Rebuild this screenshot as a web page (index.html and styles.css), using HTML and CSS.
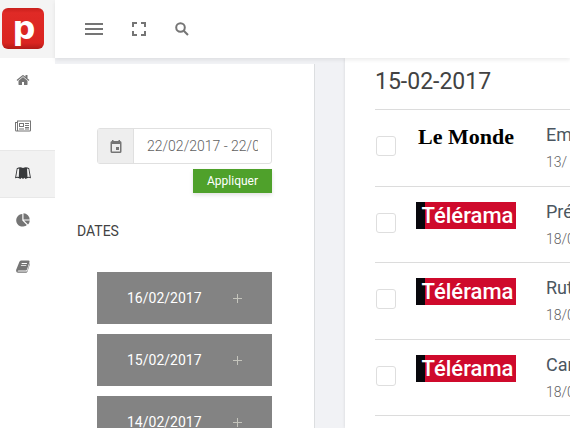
FILE: index.html
```html
<!DOCTYPE html>
<html lang="fr">
<head>
  <meta charset="UTF-8">
  <meta name="viewport" content="width=device-width, initial-scale=1.0">
  <title>Revue de presse</title>
  <link rel="stylesheet" href="styles.css">
</head>
<body>

  <!-- Menu latéral -->
  <nav class="sidebar">
    <a class="logo" href="#" aria-label="Accueil">
      <svg width="42" height="42" viewBox="0 0 42 42">
        <defs>
          <linearGradient id="rouge" x1="0" y1="0" x2="0" y2="1">
            <stop offset="0" stop-color="#c9201d"/>
            <stop offset=".12" stop-color="#e02a26"/>
            <stop offset=".85" stop-color="#da2420"/>
            <stop offset="1" stop-color="#b01a17"/>
          </linearGradient>
        </defs>
        <rect width="42" height="41" rx="6" fill="url(#rouge)"/>
        <text class="logo-lettre" x="22" y="31" text-anchor="middle">p</text>
      </svg>
    </a>
    <a class="menu-item" href="#" aria-label="Tableau de bord">
      <svg width="14" height="14" viewBox="64 0 1664 1792"><path d="M1472 992v480q0 26-19 45t-45 19h-384v-384h-256v384h-384q-26 0-45-19t-19-45v-480q0-1 .5-3t.5-3l575-474 575 474q1 2 1 6zm223-69l-62 74q-8 9-21 11h-3q-13 0-21-7l-692-577-692 577q-12 8-24 7-13-2-21-11l-62-74q-8-10-7-23.500t11-21.500l719-599q32-26 76-26t76 26l244 204v-195q0-14 9-23t23-9h192q14 0 23 9t9 23v408l219 182q10 8 11 21.500t-7 23.500z"/></svg>
    </a>
    <a class="menu-item" href="#" aria-label="Articles">
      <svg width="16" height="12" viewBox="0 0 16 12"><path fill-rule="evenodd" d="M2 .5h14v9.700q0 1.300-1.300 1.300H1.500Q0 11.500 0 10V2h2zM3 1.500V10.500h11.500q.5 0 .5-.5V1.500zM1 3v7q0 .5.500.5T2 10V3zM4 3h5v4H4zm1 1v2h3V4zM10 3h4v1h-4zm0 2h4v1h-4zm0 2h4v1h-4zM4 8.500h5v1H4zm6 0h4v1h-4z"/></svg>
    </a>
    <a class="menu-item actif" href="#" aria-label="Revues">
      <svg width="16" height="12" viewBox="0 0 16 12"><path fill-rule="evenodd" d="M1.800 1.200Q5 -.5 8 1Q11 -.5 14.200 1.200L16 11.300Q13.500 10.200 11.500 11.600L10.500 12L9.500 10.700L8 12L6.500 10.700L5.500 12L4.500 11.600Q2.500 10.200 0 11.300zM2.500 2L1.200 10Q2.700 9.600 3.800 10L4.200 1.500Q3.300 1.600 2.500 2zM12 1.500L12.500 10Q13.500 9.600 14.800 10L13.500 2Q12.800 1.600 12 1.500z"/></svg>
    </a>
    <a class="menu-item" href="#" aria-label="Statistiques">
      <svg width="14" height="14" viewBox="0 0 14 14"><path d="M6.300 1v6.400l4.500 4.500A6.300 6.300 0 1 1 6.300 1zM7.500.3a6.300 6.300 0 0 1 6.200 6.200H7.500zM8 7.500h5.800a6.300 6.300 0 0 1-1.800 4z"/></svg>
    </a>
    <a class="menu-item" href="#" aria-label="Archives">
      <svg width="14" height="13" viewBox="0 0 14 13"><path fill-rule="evenodd" d="M5 .5h7.500q1.300.1 1 1.400L11 9.500q-.3.900-1.300.9H2.500q-1 0-.9.600t.8.500h8.100q.6 0 .8-.7L13.700 3q.4.500.2 1.200L11.500 11.500q-.4 1.200-1.500 1.200H2Q.3 12.600.1 11q-.1-1 .7-2.700L3.300 2Q3.800.5 5 .5zM5.800 3l-.3.900h5.300l.3-.9zM5.100 5.200l-.3.900h5.300l.3-.9z"/></svg>
    </a>
  </nav>

  <div class="page">
    <!-- Barre du haut -->
    <header class="topbar">
      <button class="outil" type="button" aria-label="Menu">
        <svg width="18" height="12" viewBox="0 0 18 12"><path d="M0 0h18v2H0zM0 5h18v2H0zM0 10h18v2H0z"/></svg>
      </button>
      <button class="outil" type="button" aria-label="Plein écran">
        <svg width="14" height="14" viewBox="0 0 14 14"><path d="M0 0h5v2H2v3H0zM9 0h5v5h-2V2H9zM0 9h2v3h3v2H0zM12 9h2v5H9v-2h3z"/></svg>
      </button>
      <button class="outil" type="button" aria-label="Rechercher">
        <svg class="loupe" width="14" height="14" viewBox="0 0 14 14"><circle cx="5.500" cy="5.500" r="4.300"/><path d="M8.700 8.700L13 13"/></svg>
      </button>
    </header>

    <div class="contenu">
      <!-- Filtres -->
      <aside class="filtres">
        <form class="periode">
          <div class="champ">
            <label class="champ-icone" for="periode" aria-label="Période">
              <svg width="12" height="13" viewBox="0 0 12 13"><path fill-rule="evenodd" d="M2 0h1.500v1h5V0H10v1q1.500 0 1.500 1.500v9q0 1.500-1.500 1.500H2Q.5 13 .5 11.500v-9Q.5 1 2 1zM2 4v7.500h8V4zM6 7h3v3H6z"/></svg>
            </label>
            <input id="periode" type="text" value="22/02/2017 - 22/02/2017">
          </div>
          <button class="appliquer" type="button">Appliquer</button>
        </form>

        <h2 class="sous-titre">DATES</h2>
        <div class="dates">
          <button class="date" type="button">16/02/2017 <svg width="9" height="9" viewBox="0 0 9 9"><path d="M4 0h1v4h4v1H5v4H4V5H0V4h4z"/></svg></button>
          <button class="date" type="button">15/02/2017 <svg width="9" height="9" viewBox="0 0 9 9"><path d="M4 0h1v4h4v1H5v4H4V5H0V4h4z"/></svg></button>
          <button class="date" type="button">14/02/2017 <svg width="9" height="9" viewBox="0 0 9 9"><path d="M4 0h1v4h4v1H5v4H4V5H0V4h4z"/></svg></button>
        </div>
      </aside>

      <!-- Liste des articles -->
      <main class="articles">
        <h1 class="titre">15-02-2017</h1>
        <ul class="liste">
          <li class="article">
            <input class="case" type="checkbox" aria-label="Sélectionner Em">
            <span class="source monde">Le Monde</span>
            <div class="infos">
              <a class="nom" href="#">Em</a>
              <span class="jour">13/</span>
            </div>
          </li>
          <li class="article">
            <input class="case" type="checkbox" aria-label="Sélectionner Pré">
            <span class="source telerama">Télérama</span>
            <div class="infos">
              <a class="nom" href="#">Pré</a>
              <span class="jour">18/0</span>
            </div>
          </li>
          <li class="article">
            <input class="case" type="checkbox" aria-label="Sélectionner Rut">
            <span class="source telerama">Télérama</span>
            <div class="infos">
              <a class="nom" href="#">Rut</a>
              <span class="jour">18/0</span>
            </div>
          </li>
          <li class="article">
            <input class="case" type="checkbox" aria-label="Sélectionner Car">
            <span class="source telerama">Télérama</span>
            <div class="infos">
              <a class="nom" href="#">Car</a>
              <span class="jour">18/0</span>
            </div>
          </li>
        </ul>
      </main>
    </div>
  </div>

</body>
</html>
```

FILE: styles.css
```css
* {
  box-sizing: border-box;
}
body {
  margin: 0;
  height: 100vh;
  display: flex;
  overflow: hidden;
  font-family: Roboto, "Liberation Sans", sans-serif;
  font-size: 14px;
  color: #424242;
  background-color: #f1f2f5;
}
button, input {
  font-family: inherit;
}
svg {
  display: block;
  fill: #757575;
}

/* Menu latéral */
.sidebar {
  flex: 0 0 55px;
  background-color: #fff;
}
.logo {
  display: block;
  height: 58px;
  padding: 8px 2px;
  background-color: #f4f4f4;
}
.logo-lettre {
  font-family: "DejaVu Sans", sans-serif;
  font-size: 32px;
  font-weight: 700;
  fill: #fff;
}
.menu-item {
  height: 46px;
  padding: 0 10px 2px 0;
  display: flex;
  align-items: center;
  justify-content: center;
}
.menu-item.actif {
  height: 48px;
  background-color: #f2f2f2;
  border-top: 1px solid #e8e8e8;
  border-bottom: 1px solid #e8e8e8;
}
.menu-item.actif svg {
  fill: #37393b;
}

/* Barre du haut */
.page {
  flex: 1;
  min-width: 0;
  display: flex;
  flex-direction: column;
}
.topbar {
  flex: 0 0 58px;
  display: flex;
  align-items: center;
  gap: 27px;
  padding: 0 29px;
  background-color: #fff;
  box-shadow: 0 2px 4px rgba(0, 0, 0, 0.08);
  z-index: 2;
}
.outil {
  padding: 0 1px;
  border: 0;
  background: none;
  cursor: pointer;
}
.loupe {
  fill: none;
  stroke: #757575;
  stroke-width: 2;
}
.contenu {
  flex: 1;
  min-height: 0;
  display: flex;
  gap: 30px;
}

/* Filtres */
.filtres {
  flex: 0 0 260px;
  min-width: 0;
  margin-top: 6px;
  padding: 64px 42px 0 22px;
  background-color: #fff;
  border-right: 1px solid #dcdee0;
}
.periode {
  display: flex;
  flex-direction: column;
  align-items: flex-end;
  gap: 5px;
  padding-left: 20px;
}
.champ {
  width: 100%;
  height: 36px;
  display: flex;
  border: 1px solid #e0e0e0;
  border-radius: 3px;
}
.champ-icone {
  flex: 0 0 36px;
  display: flex;
  align-items: center;
  justify-content: center;
  background-color: #eee;
  border-right: 1px solid #e0e0e0;
}
.champ input {
  flex: 1;
  width: 100%;
  min-width: 0;
  padding: 0 13px;
  border: 0;
  background: none;
  font-size: 14px;
  font-weight: 300;
  color: #616161;
}
.appliquer {
  height: 24px;
  padding: 0 14px;
  border: 0;
  background-color: #4fa12b;
  color: #fff;
  font-size: 12px;
  box-shadow: 0 2px 4px rgba(0, 0, 0, 0.12);
  cursor: pointer;
}
.sous-titre {
  margin: 28px 0 31px;
  font-size: 14px;
  line-height: 20px;
  font-weight: 400;
}
.dates {
  display: flex;
  flex-direction: column;
  gap: 10px;
  padding-left: 20px;
}
.date {
  height: 52px;
  padding: 0 30px;
  display: flex;
  align-items: center;
  justify-content: space-between;
  border: 0;
  background-color: #838383;
  color: #fff;
  font-size: 14px;
  cursor: pointer;
}
.date svg {
  fill: #c4c4bc;
}

/* Liste des articles */
.articles {
  flex: 1;
  min-width: 0;
  padding-left: 30px;
  background-color: #fff;
  box-shadow: 0 0 3px rgba(0, 0, 0, 0.12);
  overflow: hidden;
}
.titre {
  margin: 0;
  padding: 8px 0 11px;
  font-size: 23px;
  line-height: 32px;
  font-weight: 400;
}
.liste {
  margin: 0;
  padding: 0;
  list-style: none;
  border-bottom: 1px solid #dcdcdc;
}
.article {
  height: 76px;
  display: flex;
  border-top: 1px solid #dcdcdc;
}
.article:nth-child(odd) {
  height: 77px;
}
.case {
  appearance: none;
  flex: 0 0 20px;
  height: 20px;
  margin: 26px 20px 0 1px;
  border: 1px solid #dedede;
  border-radius: 3px;
  background-color: #fff;
}
.source {
  flex: 0 0 100px;
  height: 27px;
  margin: 15px 30px 0 0;
  line-height: 27px;
  text-align: center;
  white-space: nowrap;
}
.monde {
  margin-top: 13px;
  font-family: "Liberation Serif", serif;
  font-size: 22px;
  font-weight: 700;
  color: #000;
}
.telerama {
  padding-left: 3px;
  font-size: 22px;
  font-weight: 500;
  color: #fff;
  background: linear-gradient(to right, #08070c 9px, #cf0a2c 9px);
}
.infos {
  white-space: nowrap;
}
.nom {
  display: block;
  padding-top: 12px;
  font-size: 18px;
  line-height: 26px;
  color: #4b5660;
  text-decoration: none;
}
.jour {
  display: block;
  font-size: 14px;
  line-height: 28px;
  font-weight: 300;
  color: #616161;
}
```
